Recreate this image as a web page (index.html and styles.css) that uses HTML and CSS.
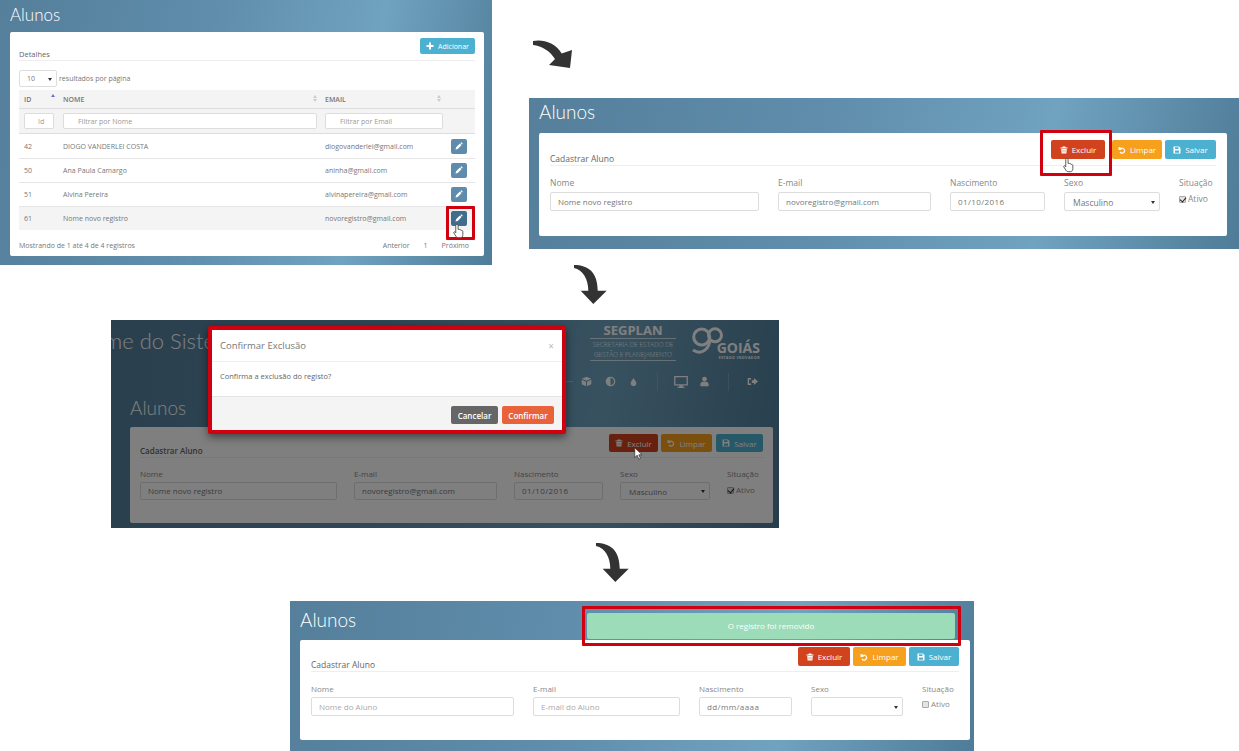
FILE: index.html
```html
<!DOCTYPE html>
<html lang="en">
<head>
  <meta charset="UTF-8">
  <title>Alunos</title>
  <link rel="stylesheet" href="styles.css">
</head>
<body>
  <svg class="sprite" width="0" height="0">
    <symbol id="i-plus" viewBox="0 0 16 16"><path d="M6 1h4v5h5v4h-5v5H6v-5H1V6h5z"/></symbol>
    <symbol id="i-pencil" viewBox="0 0 16 16"><path d="M1 15l1.200-4.600 7.600-7.600 3.400 3.400-7.600 7.600zM10.800 1.800l1-1a1 1 0 0 1 1.400 0l2 2a1 1 0 0 1 0 1.400l-1 1z"/></symbol>
    <symbol id="i-trash" viewBox="0 0 16 16"><path fill-rule="evenodd" d="M5.500 1h5l1 2H15v2H1V3h3.500zM2.500 6h11l-.7 9H3.200zM5.500 8v5h1V8zM9.500 8v5h1V8z"/></symbol>
    <symbol id="i-undo" viewBox="0 0 16 16"><path d="M1 2l5 1-1.200 1.400A6 6 0 1 1 3 12.500l1.800-1.500A3.700 3.700 0 1 0 6.500 6L8 7.500 1 8z"/></symbol>
    <symbol id="i-save" viewBox="0 0 16 16"><path fill-rule="evenodd" d="M1 1h11l3 3v11H1zM4 2.500V6h7V2.500zM4 9v4.500h8V9z"/></symbol>
    <symbol id="i-box" viewBox="0 0 16 16"><path d="M8 1l7 3-7 3-7-3zM1 5.500l6.300 2.700V15L1 12zM15 5.500L8.700 8.200V15l6.300-3z"/></symbol>
    <symbol id="i-contrast" viewBox="0 0 16 16"><path fill-rule="evenodd" d="M8 1a7 7 0 1 1 0 14A7 7 0 0 1 8 1zm0 2v10a5 5 0 0 0 0-10z"/></symbol>
    <symbol id="i-drop" viewBox="0 0 16 16"><path d="M8 1c2 4 5 6 5 9a5 5 0 0 1-10 0c0-3 3-5 5-9z"/></symbol>
    <symbol id="i-monitor" viewBox="0 0 16 14"><path fill-rule="evenodd" d="M0 0h16v11h-6v1.500h2V14H4v-1.500h2V11H0zM1.500 1.500v8h13v-8z"/></symbol>
    <symbol id="i-user" viewBox="0 0 16 16"><path d="M8 1a3.500 3.500 0 1 1 0 7 3.500 3.500 0 0 1 0-7zM2 15v-3c0-2 2-3.500 3-3.500h6c1 0 3 1.500 3 3.500v3z"/></symbol>
    <symbol id="i-exit" viewBox="0 0 16 16"><path d="M1 3h5v2H3v6h3v2H1zM7 6h3V3l6 5-6 5v-3H7z"/></symbol>
    <symbol id="i-hand" viewBox="0 0 14 20"><path fill="#fff" stroke="#333" stroke-width="1" d="M5 1.500c1 0 1.500.7 1.500 1.500v5l1-.2c.8 0 1.200.3 1.400.8.800-.3 1.600 0 1.800.7.900-.2 1.800.3 1.800 1.400v4c0 2-1 3.800-3 3.800H6.500c-1.500 0-2.300-1-3-2.200L1 12.500c-.5-1 .7-2 1.700-1.200l.8.900V3c0-.8.500-1.500 1.500-1.500z"/></symbol>
    <symbol id="i-curve-1" viewBox="0 0 42 30"><path d="M2 1C11-1 24 2 30.700 13.500L41 10l-2 18-21-3 6-6C19 11 11 6 2 5z"/></symbol>
    <symbol id="i-curve-2" viewBox="0 0 36 42"><path d="M1 1c14 0 23.700 7 23.700 25.700h9L20.300 40 7.700 26.700h7.600C15.300 15 10 6 1 4z"/></symbol>
  </svg>

  <main class="canvas">

    <section class="shot shot-list">
      <h1 class="shot-title">Alunos</h1>
      <div class="card">
        <div class="legend-row">
          <span class="legend">Detalhes</span>
          <button class="btn btn-info"><svg class="ico"><use href="#i-plus"/></svg>Adicionar</button>
        </div>
        <div class="page-size">
          <span class="fake-select">10<i class="caret"></i></span>
          <span>resultados por página</span>
        </div>
        <table class="grid-table">
          <thead>
            <tr class="head-row">
              <th class="col-id">ID<i class="sort sort-on"></i></th>
              <th class="col-name">NOME<i class="sort"></i></th>
              <th class="col-email">EMAIL<i class="sort"></i></th>
              <th class="col-act"></th>
            </tr>
            <tr class="filter-row">
              <th><input class="filter filter-center" placeholder="Id"></th>
              <th><input class="filter" placeholder="Filtrar por Nome"></th>
              <th><input class="filter" placeholder="Filtrar por Email"></th>
              <th></th>
            </tr>
          </thead>
          <tbody>
            <tr><td>42</td><td>DIOGO VANDERLEI COSTA</td><td>diogovanderlei@gmail.com</td><td><button class="btn-edit"><svg class="ico"><use href="#i-pencil"/></svg></button></td></tr>
            <tr><td>50</td><td>Ana Paula Camargo</td><td>aninha@gmail.com</td><td><button class="btn-edit"><svg class="ico"><use href="#i-pencil"/></svg></button></td></tr>
            <tr><td>51</td><td>Alvina Pereira</td><td>alvinapereira@gmail.com</td><td><button class="btn-edit"><svg class="ico"><use href="#i-pencil"/></svg></button></td></tr>
            <tr class="row-active"><td>61</td><td>Nome novo registro</td><td>novoregistro@gmail.com</td><td><button class="btn-edit btn-edit-hover"><svg class="ico"><use href="#i-pencil"/></svg></button></td></tr>
          </tbody>
        </table>
        <div class="table-foot">
          <span>Mostrando de 1 até 4 de 4 registros</span>
          <span class="pager"><span>Anterior</span><span>1</span><span>Próximo</span></span>
        </div>
      </div>
      <div class="mark mark-edit"></div>
      <svg class="cursor cursor-edit"><use href="#i-hand"/></svg>
    </section>

    <svg class="arrow arrow-1"><use href="#i-curve-1"/></svg>

    <section class="shot shot-edit">
      <h1 class="shot-title">Alunos</h1>
      <div class="card">
        <div class="legend-row">
          <span class="legend">Cadastrar Aluno</span>
          <div class="actions">
            <button class="btn btn-danger"><svg class="ico"><use href="#i-trash"/></svg>Excluir</button>
            <button class="btn btn-warn"><svg class="ico"><use href="#i-undo"/></svg>Limpar</button>
            <button class="btn btn-info"><svg class="ico"><use href="#i-save"/></svg>Salvar</button>
          </div>
        </div>
        <div class="fields">
          <label class="field">Nome<input value="Nome novo registro"></label>
          <label class="field">E-mail<input value="novoregistro@gmail.com"></label>
          <label class="field">Nascimento<input class="date" value="01/10/2016"></label>
          <label class="field">Sexo<span class="fake-select">Masculino<i class="caret"></i></span></label>
          <div class="field">Situação<label class="check"><input type="checkbox" checked>Ativo</label></div>
        </div>
      </div>
      <div class="mark mark-delete"></div>
      <svg class="cursor cursor-delete"><use href="#i-hand"/></svg>
    </section>

    <svg class="arrow arrow-2"><use href="#i-curve-2"/></svg>

    <section class="shot shot-modal">
      <header class="topbar">
        <span class="system-name">Nome do Sistema</span>
        <div class="brands">
          <div class="segplan">
            <strong>SEGPLAN</strong>
            <span class="segplan-sub">SECRETARIA DE ESTADO DE<br>GESTÃO E PLANEJAMENTO</span>
          </div>
          <div class="goias">
            <svg class="goias-mark" viewBox="0 0 34 32"><circle cx="11.700" cy="13" r="8"/><circle cx="25" cy="11.300" r="6.500"/><path d="M19.700 15C20 24 12 32 3 26"/></svg>
            <div class="goias-name">GOIÁS<small>ESTADO INOVADOR</small></div>
          </div>
        </div>
      </header>
      <nav class="nav-icons">
        <i class="nav-dash"></i>
        <svg class="nav-ico"><use href="#i-box"/></svg>
        <svg class="nav-ico"><use href="#i-contrast"/></svg>
        <svg class="nav-ico nav-ico-drop"><use href="#i-drop"/></svg>
        <i class="nav-sep"></i>
        <svg class="nav-ico nav-ico-big"><use href="#i-monitor"/></svg>
        <svg class="nav-ico"><use href="#i-user"/></svg>
        <i class="nav-sep"></i>
        <svg class="nav-ico"><use href="#i-exit"/></svg>
      </nav>
      <h1 class="shot-title">Alunos</h1>
      <div class="card">
        <div class="legend-row">
          <span class="legend">Cadastrar Aluno</span>
          <div class="actions">
            <button class="btn btn-danger"><svg class="ico"><use href="#i-trash"/></svg>Excluir</button>
            <button class="btn btn-warn"><svg class="ico"><use href="#i-undo"/></svg>Limpar</button>
            <button class="btn btn-info"><svg class="ico"><use href="#i-save"/></svg>Salvar</button>
          </div>
        </div>
        <div class="fields">
          <label class="field">Nome<input value="Nome novo registro"></label>
          <label class="field">E-mail<input value="novoregistro@gmail.com"></label>
          <label class="field">Nascimento<input class="date" value="01/10/2016"></label>
          <label class="field">Sexo<span class="fake-select">Masculino<i class="caret"></i></span></label>
          <div class="field">Situação<label class="check"><input type="checkbox" checked>Ativo</label></div>
        </div>
      </div>
      <div class="dim"></div>
      <svg class="cursor cursor-arrow" viewBox="0 0 10 16"><path fill="#fff" stroke="#222" stroke-width=".8" d="M1 1v12l3-3 2 5 2-1-2-4.500h4z"/></svg>
      <div class="modal">
        <div class="modal-head"><span>Confirmar Exclusão</span><span class="modal-x">×</span></div>
        <div class="modal-body">Confirma a exclusão do registo?</div>
        <div class="modal-foot">
          <button class="btn btn-grey">Cancelar</button>
          <button class="btn btn-orange">Confirmar</button>
        </div>
      </div>
    </section>

    <svg class="arrow arrow-3"><use href="#i-curve-2"/></svg>

    <section class="shot shot-done">
      <h1 class="shot-title">Alunos</h1>
      <div class="card">
        <div class="legend-row">
          <span class="legend">Cadastrar Aluno</span>
          <div class="actions">
            <button class="btn btn-danger"><svg class="ico"><use href="#i-trash"/></svg>Excluir</button>
            <button class="btn btn-warn"><svg class="ico"><use href="#i-undo"/></svg>Limpar</button>
            <button class="btn btn-info"><svg class="ico"><use href="#i-save"/></svg>Salvar</button>
          </div>
        </div>
        <div class="fields">
          <label class="field">Nome<input placeholder="Nome do Aluno"></label>
          <label class="field">E-mail<input placeholder="E-mail do Aluno"></label>
          <label class="field">Nascimento<input class="date" value="dd/mm/aaaa"></label>
          <label class="field">Sexo<span class="fake-select"><i class="caret"></i></span></label>
          <div class="field">Situação<label class="check"><input type="checkbox">Ativo</label></div>
        </div>
      </div>
      <div class="alert-ok">O registro foi removido</div>
      <div class="mark mark-alert"></div>
    </section>

  </main>
</body>
</html>
```

FILE: styles.css
```css
* { box-sizing: border-box; }
body { margin: 0; background: #fff; font-family: "Open Sans", "Liberation Sans", sans-serif; color: #777; }
.sprite { position: absolute; }
.canvas { position: relative; width: 1239px; height: 751px; overflow: hidden; }

/* each screenshot sits on the free canvas */
.shot { position: absolute; overflow: hidden; background: linear-gradient(100deg, #557f9b 0%, #5f8dab 40%, #70a3c0 72%, #4f7c98 100%); }
.shot-list { left: 0; top: 0; width: 492px; height: 265px; padding: 0 8px 0 10px; font-size: 7px; }
.shot-edit { left: 529px; top: 98px; width: 710px; height: 151px; padding: 0 12px 0 10px; font-size: 8.500px; }
.shot-modal { left: 111px; top: 320px; width: 668px; height: 208px; padding: 0 6px 0 19px; font-size: 8px; }
.shot-done { left: 290px; top: 601px; width: 684px; height: 150px; padding: 0 4px 0 10px; font-size: 8px; }

.shot-title { margin: 0; font-family: Lato, sans-serif; font-weight: 300; color: #fff; }
.shot-list .shot-title { font-size: 17px; height: 32px; line-height: 30px; }
.shot-edit .shot-title { font-size: 19px; height: 35px; line-height: 28px; }
.shot-modal .shot-title { font-size: 19px; height: 31px; line-height: 23px; }
.shot-done .shot-title { font-size: 19px; height: 39px; line-height: 37px; }

.card { background: #fff; border-radius: 2px; }
.shot-list .card { height: 224px; padding: 6px 9px; }
.shot-edit .card { height: 103px; padding: 7px 11px; }
.shot-modal .card { height: 96px; padding: 7px 10px; }
.shot-done .card { height: 100px; padding: 7px 11px; }

.legend-row { display: flex; justify-content: space-between; align-items: flex-start; border-bottom: 1px solid #eee; position: relative; }
.shot-list .legend-row { height: 23px; }
.shot-edit .legend-row { height: 26px; }
.shot-modal .legend-row { height: 24px; }
.shot-done .legend-row { height: 25px; }
.legend { align-self: flex-end; color: #666; font-size: 8px; line-height: 12px; }
.shot-list .legend { font-size: 7.500px; }
.shot-edit .legend, .shot-done .legend { font-size: 8.500px; }
.shot-modal .legend { font-weight: 600; }
.actions { display: flex; gap: 3px; }

.btn { display: inline-flex; align-items: center; justify-content: center; gap: 4px; height: 19px; padding: 0; border: 0; border-radius: 2px; color: #fff; font: 400 8px "Open Sans", sans-serif; }
.ico { width: 8px; height: 8px; fill: #fff; }
.btn-info { background: #4cb1d1; }
.btn-danger { background: #d0431e; width: 52px; }
.btn-warn { background: #f7a01d; width: 53px; }
.actions .btn-info { width: 50px; }
.shot-list .btn-info { width: 55px; height: 16px; font-size: 7px; }
.shot-edit .btn-danger { width: 54px; margin-right: 4px; }
.shot-edit .btn-warn { width: 50px; }
.shot-edit .btn-info { width: 51px; }
.shot-modal .btn { height: 18px; }
.shot-modal .btn-danger { width: 49px; }
.shot-modal .btn-warn { width: 51px; }
.shot-modal .actions .btn-info { width: 47px; margin-left: 1px; }

.page-size { display: flex; align-items: center; gap: 2px; margin-top: 9px; height: 17px; }
.fake-select { position: relative; display: block; height: 19px; line-height: 19px; padding-left: 8px; border: 1px solid #ddd; border-radius: 2px; background: #fff; color: #777; }
.page-size .fake-select { width: 38px; height: 17px; line-height: 15px; padding-left: 7px; }
.caret { position: absolute; right: 4px; top: 50%; margin-top: -1px; border: 2px solid transparent; border-top: 3px solid #333; border-bottom: 0; }

.grid-table { width: 456px; margin-top: 3px; border-collapse: collapse; table-layout: fixed; }
.grid-table th { text-align: left; font-weight: 600; padding: 1px 0 0 5px; position: relative; }
.grid-table .col-id { width: 40px; }
.grid-table .col-name { width: 262px; padding-left: 4px; }
.grid-table .col-email { width: 124px; padding-left: 4px; }
.head-row { height: 18px; background: #f4f4f4; border-bottom: 1px solid #ddd; color: #777; }
.filter-row { height: 25px; background: #f4f4f4; border-bottom: 1px solid #ddd; }
.filter-row th:nth-child(2), .filter-row th:nth-child(3) { padding-left: 4px; }
.filter { display: block; height: 16px; width: 30px; padding: 0 0 0 14px; border: 1px solid #ddd; border-radius: 2px; background: #fff; font: 7px "Open Sans", sans-serif; }
.filter::placeholder { color: #999; }
.filter-center { padding-left: 13px; }
.filter-row th:nth-child(2) .filter { width: 254px; }
.filter-row th:nth-child(3) .filter { width: 118px; }
.sort { position: absolute; right: 4px; top: 5px; border: 2px solid transparent; border-bottom: 3px solid #ccc; border-top: 0; }
.sort::after { content: ""; position: absolute; left: -2px; top: 4px; border: 2px solid transparent; border-top: 3px solid #ccc; border-bottom: 0; }
.sort-on { border-bottom-color: #6a6fd8; top: 4px; }
.sort-on::after { display: none; }
.grid-table td { height: 24px; padding: 0 0 0 4px; border-bottom: 1px solid #e6e6e6; }
.grid-table tbody tr:first-child td { height: 25px; padding-top: 1px; }
.grid-table td:first-child { padding-left: 5px; }
.grid-table tbody tr:last-child td { border-bottom: 0; }
.row-active { background: #f4f4f4; }
.btn-edit { display: flex; align-items: center; justify-content: center; width: 16px; height: 15px; padding: 0; margin-left: 2px; border: 0; border-radius: 2px; background: #5f8cad; }
.btn-edit-hover { background: #416c8e; }

.table-foot { display: flex; justify-content: space-between; margin-top: 11px; line-height: 10px; }
.pager { display: flex; gap: 14px; padding-right: 6px; }

.fields { display: grid; column-gap: 19px; margin-top: 12px; }
.shot-edit .fields { grid-template-columns: 209px 153px 95px 96px auto; }
.shot-modal .fields { grid-template-columns: 197px 143px 89px 90px auto; column-gap: 17px; margin-top: 11px; }
.shot-done .fields { grid-template-columns: 203px 147px 93px 92px auto; }
.field { display: block; line-height: 10px; color: #888; }
.field > input, .field > .fake-select { display: block; width: 100%; height: 19px; margin-top: 4px; }
.shot-modal .field > input, .shot-modal .field > .fake-select { height: 18px; margin-top: 3px; line-height: 18px; }
.shot-done .field > input, .shot-done .field > .fake-select { margin-top: 3px; }
.field > input { padding: 0 0 0 7px; border: 1px solid #ddd; border-radius: 2px; font: 8px "Open Sans", sans-serif; color: #777; }
.field > input::placeholder { color: #aaa; }
.field > .date { letter-spacing: .4px; }
.check { display: flex; align-items: center; gap: 2px; margin-top: 6px; }
.shot-done .check { margin-top: 5px; }
.check input { appearance: none; position: relative; width: 7px; height: 7px; margin: 0; border: 1px solid #aaa; border-radius: 1px; background: #e4e4e4; }
.check input:checked::after { content: ""; position: absolute; left: 1px; top: -1px; width: 3px; height: 5px; border: solid #222; border-width: 0 1.500px 1.500px 0; transform: rotate(40deg); }

/* highlight frames, cursors and arrows lie over the shots */
.mark { position: absolute; border: 3px solid #d0000f; border-radius: 1px; }
.mark-edit { left: 446px; top: 206px; width: 29px; height: 34px; }
.mark-delete { left: 511px; top: 32px; width: 72px; height: 46px; }
.mark-alert { left: 292px; top: 5px; width: 379px; height: 40px; }
.alert-ok { position: absolute; left: 297px; top: 12px; width: 368px; height: 26px; line-height: 26px; text-align: center; background: #9cdcb8; color: #fff; font-size: 8px; border-radius: 2px; }

.cursor { position: absolute; width: 11px; height: 16px; }
.cursor-edit { left: 453px; top: 223px; }
.cursor-delete { left: 534px; top: 59px; }
.cursor-arrow { left: 522px; top: 127px; width: 10px; height: 13px; }

.arrow { position: absolute; fill: #333; }
.arrow-1 { left: 531px; top: 40px; width: 42px; height: 30px; }
.arrow-2 { left: 573px; top: 264px; width: 36px; height: 42px; }
.arrow-3 { left: 595px; top: 542px; width: 36px; height: 42px; }

/* dimmed shot behind the dialog */
.topbar { display: flex; justify-content: space-between; height: 50px; margin-left: -54px; color: #fff; }
.system-name { font-family: Lato, sans-serif; font-weight: 300; font-size: 22px; line-height: 42px; white-space: nowrap; }
.brands { display: flex; gap: 16px; padding-right: 13px; }
.segplan { width: 86px; text-align: center; padding-top: 3px; }
.segplan strong { display: block; font-size: 13px; line-height: 15px; }
.segplan-sub { display: block; border-top: 1px solid rgba(255,255,255,.7); border-bottom: 1px solid rgba(255,255,255,.7); padding: 1px 0; font-size: 6.500px; line-height: 9.500px; white-space: nowrap; font-weight: 300; }
.goias { position: relative; width: 68px; }
.goias-mark { position: absolute; left: -2px; top: 4px; width: 34px; height: 32px; fill: none; stroke: #fff; stroke-width: 3; }
.goias-name { position: absolute; right: 0; top: 21px; font-size: 14px; line-height: 14px; font-weight: 700; text-align: right; }
.goias-name small { display: block; font-size: 3.500px; line-height: 5px; letter-spacing: .5px; white-space: nowrap; }
.nav-icons { display: grid; grid-auto-flow: column; grid-auto-columns: 23.700px; justify-content: end; justify-items: center; align-items: center; height: 23px; padding-right: 9px; margin-bottom: 3px; }
.nav-ico { width: 11px; height: 11px; fill: #fff; }
.nav-ico-drop { width: 9px; height: 10px; }
.nav-ico-big { width: 14px; height: 12px; }
.nav-sep { width: 1px; height: 18px; background: rgba(255,255,255,.18); }
.nav-dash { width: 20px; height: 1px; background: rgba(255,255,255,.4); }
.dim { position: absolute; inset: 0; background: rgba(0,0,0,.5); }

.modal { position: absolute; left: 97px; top: 6px; width: 358px; height: 108px; border: 4px solid #d0000f; border-radius: 2px; background: #fff; box-shadow: 0 3px 8px rgba(0,0,0,.5); }
.modal-head { display: flex; justify-content: space-between; align-items: center; height: 32px; padding: 0 8px; border-bottom: 1px solid #eee; font-size: 9.500px; color: #777; }
.modal-x { color: #bbb; font-size: 10px; }
.modal-body { height: 34px; padding-left: 8px; line-height: 29px; font-size: 7.500px; color: #666; }
.modal-foot { display: flex; justify-content: flex-end; gap: 4px; height: 34px; padding: 9px 8px 0 0; background: #f4f4f4; border-top: 1px solid #e4e4e4; }
.btn-grey { width: 47px; height: 18px; background: #666; font-weight: 600; }
.btn-orange { width: 52px; height: 18px; background: #e8633a; font-weight: 600; }
```
